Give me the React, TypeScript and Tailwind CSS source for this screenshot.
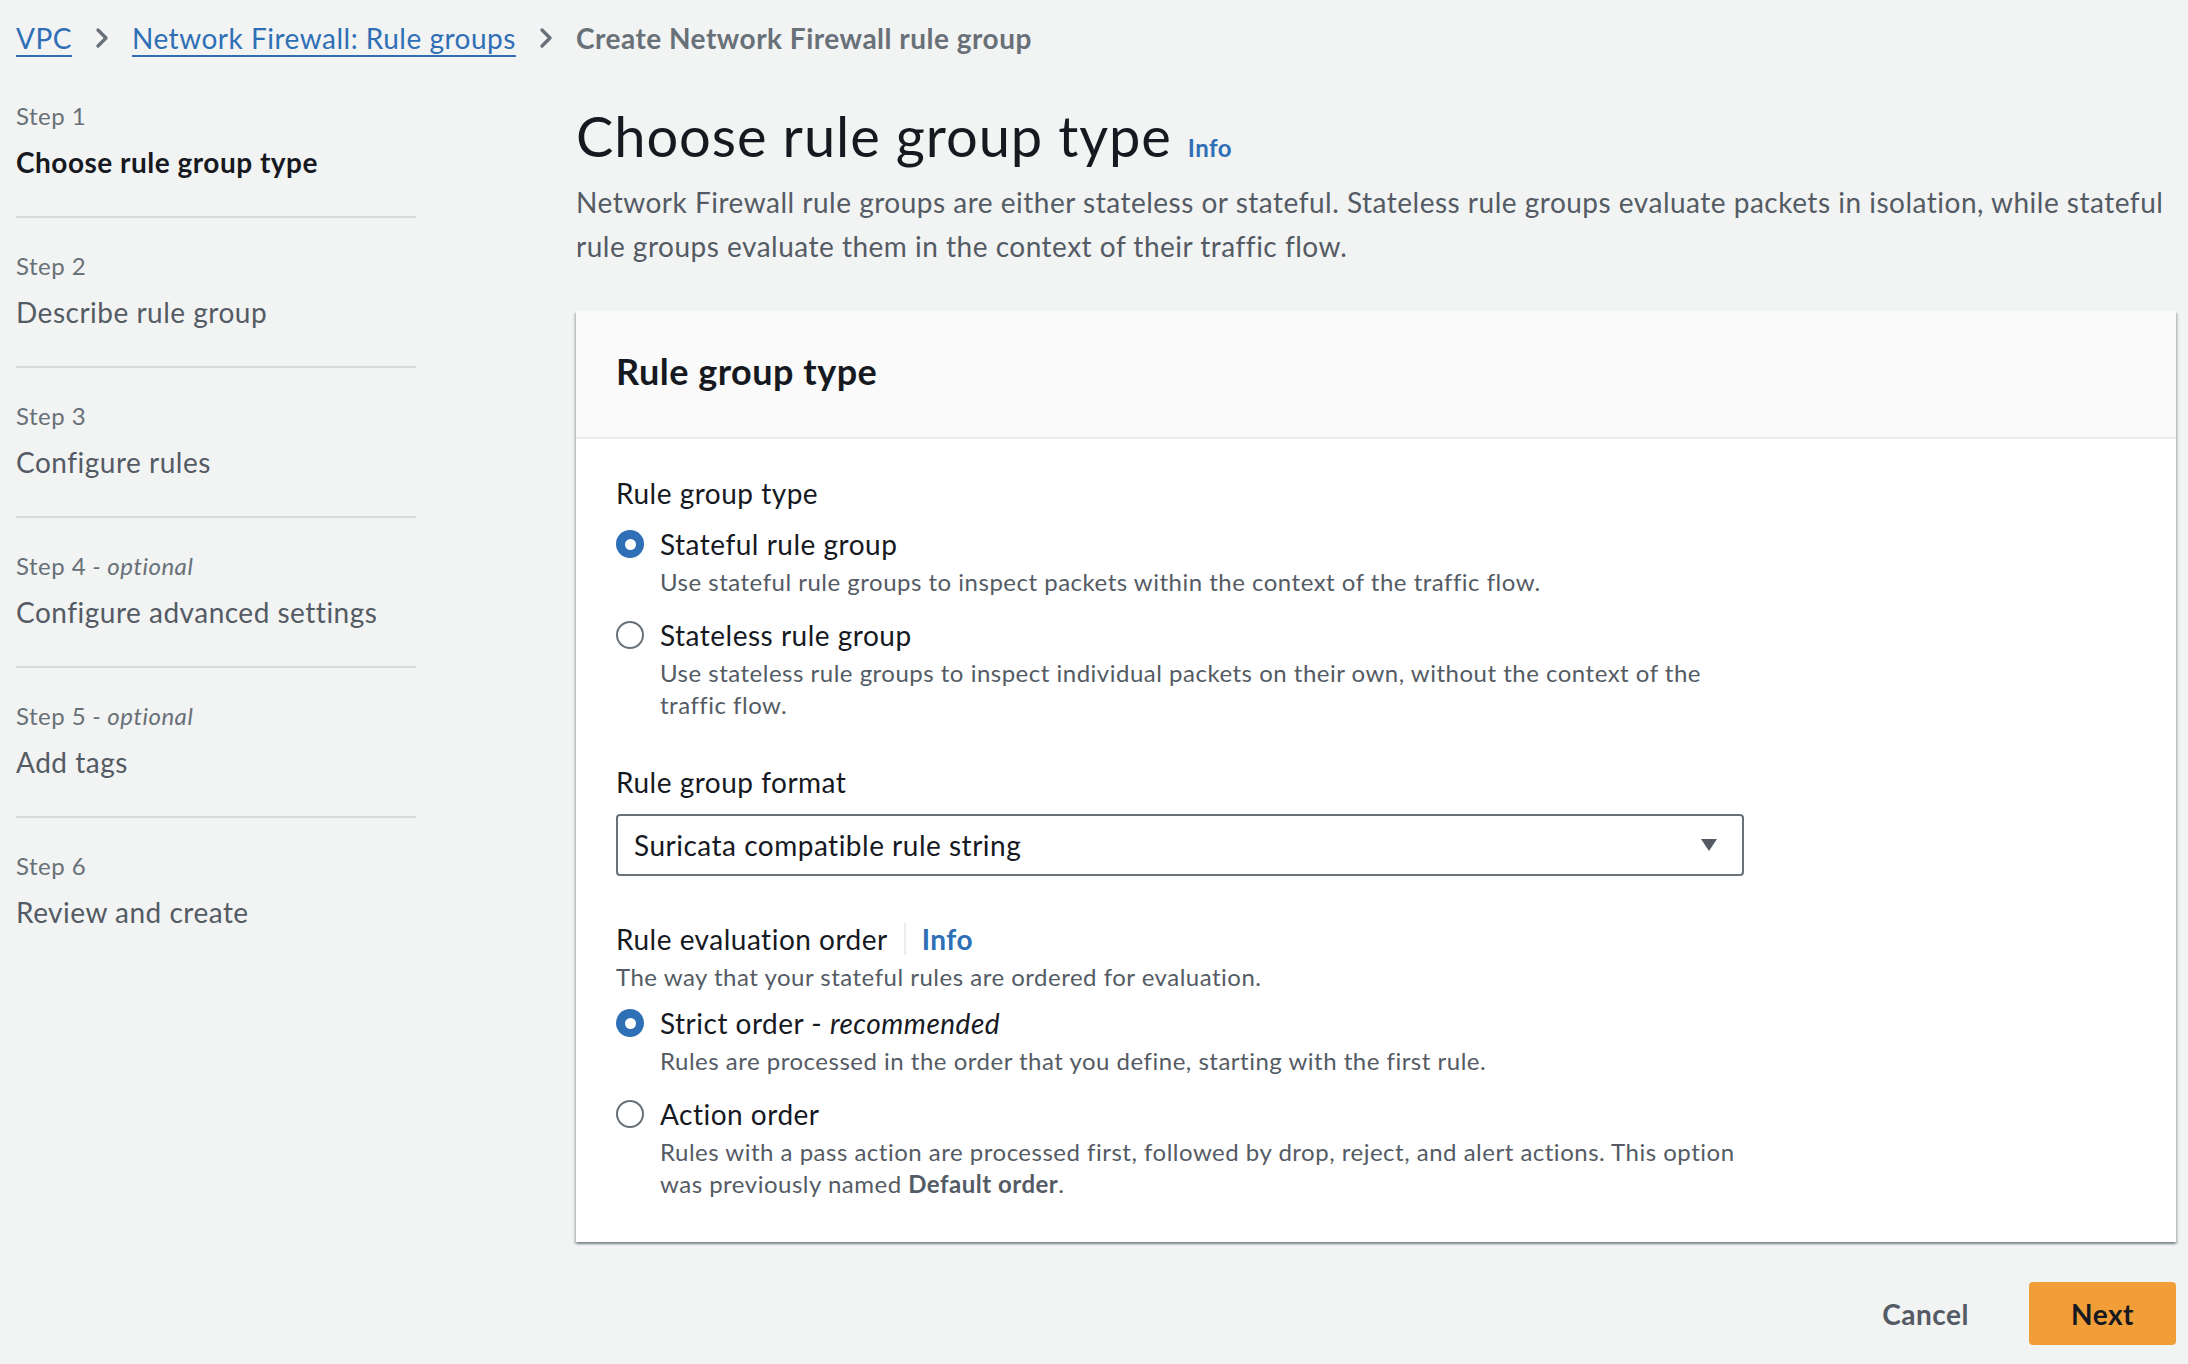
import { ChevronRight } from "lucide-react";

const steps = [
  { label: "Step 1", title: "Choose rule group type", active: true },
  { label: "Step 2", title: "Describe rule group" },
  { label: "Step 3", title: "Configure rules" },
  { label: "Step 4", optional: true, title: "Configure advanced settings" },
  { label: "Step 5", optional: true, title: "Add tags" },
  { label: "Step 6", title: "Review and create" },
];

const Radio = ({
  checked,
  label,
  children,
}: {
  checked?: boolean;
  label: React.ReactNode;
  children: React.ReactNode;
}) => {
  return (
    <div className="flex gap-4">
      <div className="flex h-[44px] items-center">
        {checked ? (
          <span className="flex h-[28px] w-[28px] items-center justify-center rounded-full bg-[#2f6fb6]">
            <span className="h-[11px] w-[11px] rounded-full bg-white" />
          </span>
        ) : (
          <span className="h-[28px] w-[28px] rounded-full border-2 border-[#687078] bg-white" />
        )}
      </div>
      <div className="flex flex-col">
        <div className="text-[28px] leading-[44px] text-[#16191f]">{label}</div>
        <p className="text-[24px] leading-[32px] text-[#545b64]">{children}</p>
      </div>
    </div>
  );
};

export default function App() {
  return (
    <div
      className="min-h-screen bg-[#f2f3f3] tracking-[0.5px] text-[#16191f]"
      style={{ fontFamily: "Lato, 'Open Sans', sans-serif" }}
    >
      <nav className="flex items-center gap-[14px] px-4 pt-4 text-[28px] leading-[44px]">
        <a className="text-[#2f6fb6] underline decoration-2 underline-offset-[6px]">VPC</a>
        <ChevronRight className="h-8 w-8 text-[#687078]" strokeWidth={2.5} />
        <a className="text-[#2f6fb6] underline decoration-2 underline-offset-[6px]">
          Network Firewall: Rule groups
        </a>
        <ChevronRight className="h-8 w-8 text-[#687078]" strokeWidth={2.5} />
        <span className="font-bold text-[#687078]">Create Network Firewall rule group</span>
      </nav>

      <div className="mt-10 flex pl-4 pr-3">
        <ul className="w-[400px] shrink-0">
          {steps.map((s, i) => (
            <li
              key={s.label}
              className={`pb-8 ${i === 0 ? "" : "pt-8"} ${
                i === steps.length - 1 ? "" : "border-b-2 border-[#d5dbdb]"
              }`}
            >
              <div className="text-[24px] leading-[32px] text-[#687078]">
                {s.label}
                {s.optional && <i> - optional</i>}
              </div>
              <div
                className={`mt-2 text-[28px] leading-[44px] ${
                  s.active ? "font-bold text-[#16191f]" : "text-[#545b64]"
                }`}
              >
                {s.title}
              </div>
            </li>
          ))}
        </ul>

        <main className="ml-[160px] flex-1">
          <div className="flex items-baseline gap-4">
            <h1 className="text-[56px] leading-[72px] tracking-[0.9px] text-[#16191f]">
              Choose rule group type
            </h1>
            <span className="text-[24px] font-bold text-[#2f6fb6]">Info</span>
          </div>
          <p className="mt-2 text-[28px] leading-[44px] text-[#545b64]">
            Network Firewall rule groups are either stateless or stateful. Stateless rule groups
            evaluate packets in isolation, while stateful rule groups evaluate them in the context
            of their traffic flow.
          </p>

          <section className="mt-[43px] bg-white shadow-[0_2px_2px_0_rgba(0,28,36,0.3),2px_2px_2px_0_rgba(0,28,36,0.15),-2px_2px_2px_0_rgba(0,28,36,0.15)]">
            <header className="border-b-2 border-[#eaeded] bg-[#fafafa] px-10 pt-[38px] pb-[44px]">
              <h2 className="text-[36px] leading-[44px] font-bold">Rule group type</h2>
            </header>
            <div className="max-w-[1208px] px-10 pt-8 pb-[42px]">
              <div className="text-[28px] leading-[44px]">Rule group type</div>
              <div className="mt-[7px] flex flex-col gap-[15px]">
                <Radio checked label="Stateful rule group">
                  Use stateful rule groups to inspect packets within the context of the traffic
                  flow.
                </Radio>
                <Radio label="Stateless rule group">
                  Use stateless rule groups to inspect individual packets on their own, without
                  the context of the traffic flow.
                </Radio>
              </div>

              <div className="mt-[39px] text-[28px] leading-[44px]">Rule group format</div>
              <div className="mt-[10px] flex h-[62px] items-center justify-between rounded-[4px] border-2 border-[#687078] pr-6 pl-4">
                <span className="text-[28px]">Suricata compatible rule string</span>
                <svg width="18" height="14" viewBox="0 0 18 14">
                  <path d="M1 1h16L9 13z" fill="#545b64" />
                </svg>
              </div>

              <div className="mt-[41px] flex items-center text-[28px] leading-[44px]">
                <span>Rule evaluation order</span>
                <span className="mx-4 h-8 w-[2px] bg-[#eaeded]" />
                <span className="font-bold text-[#2f6fb6]">Info</span>
              </div>
              <p className="text-[24px] leading-[32px] text-[#545b64]">
                The way that your stateful rules are ordered for evaluation.
              </p>
              <div className="mt-2 flex flex-col gap-[15px]">
                <Radio
                  checked
                  label={
                    <>
                      Strict order - <i>recommended</i>
                    </>
                  }
                >
                  Rules are processed in the order that you define, starting with the first rule.
                </Radio>
                <Radio label="Action order">
                  Rules with a pass action are processed first, followed by drop, reject, and alert
                  actions. This option was previously named{" "}
                  <b className="text-[#545b64]">Default order</b>.
                </Radio>
              </div>
            </div>
          </section>

          <div className="mt-10 flex items-center justify-end gap-7">
            <button className="px-8 text-[28px] font-bold text-[#545b64]">Cancel</button>
            <button className="h-[63px] w-[147px] rounded-[4px] bg-[#f29e38] text-[28px] font-bold text-[#16191f]">
              Next
            </button>
          </div>
        </main>
      </div>
    </div>
  );
}
